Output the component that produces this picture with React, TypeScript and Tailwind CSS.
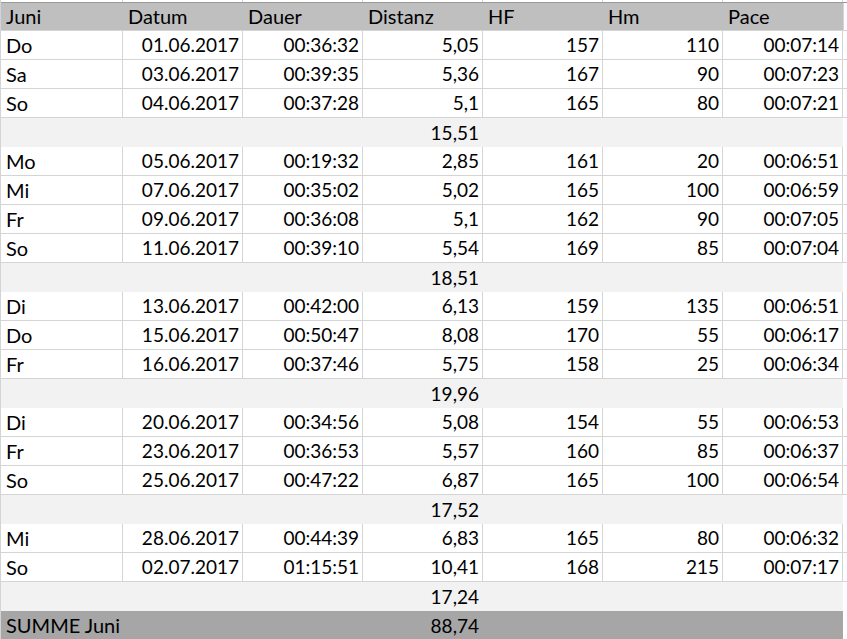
// App.tsx - Laufprotokoll Juni (spreadsheet view)

type Run = {
  tag: string;
  datum: string;
  dauer: string;
  distanz: string;
  hf: string;
  hm: string;
  pace: string;
};

type Row = { kind: 'run'; run: Run } | { kind: 'sub'; value: string };

const run = (
  tag: string,
  datum: string,
  dauer: string,
  distanz: string,
  hf: string,
  hm: string,
  pace: string
): Row => ({ kind: 'run', run: { tag, datum, dauer, distanz, hf, hm, pace } });

const sub = (value: string): Row => ({ kind: 'sub', value });

const rows: Row[] = [
  run('Do', '01.06.2017', '00:36:32', '5,05', '157', '110', '00:07:14'),
  run('Sa', '03.06.2017', '00:39:35', '5,36', '167', '90', '00:07:23'),
  run('So', '04.06.2017', '00:37:28', '5,1', '165', '80', '00:07:21'),
  sub('15,51'),
  run('Mo', '05.06.2017', '00:19:32', '2,85', '161', '20', '00:06:51'),
  run('Mi', '07.06.2017', '00:35:02', '5,02', '165', '100', '00:06:59'),
  run('Fr', '09.06.2017', '00:36:08', '5,1', '162', '90', '00:07:05'),
  run('So', '11.06.2017', '00:39:10', '5,54', '169', '85', '00:07:04'),
  sub('18,51'),
  run('Di', '13.06.2017', '00:42:00', '6,13', '159', '135', '00:06:51'),
  run('Do', '15.06.2017', '00:50:47', '8,08', '170', '55', '00:06:17'),
  run('Fr', '16.06.2017', '00:37:46', '5,75', '158', '25', '00:06:34'),
  sub('19,96'),
  run('Di', '20.06.2017', '00:34:56', '5,08', '154', '55', '00:06:53'),
  run('Fr', '23.06.2017', '00:36:53', '5,57', '160', '85', '00:06:37'),
  run('So', '25.06.2017', '00:47:22', '6,87', '165', '100', '00:06:54'),
  sub('17,52'),
  run('Mi', '28.06.2017', '00:44:39', '6,83', '165', '80', '00:06:32'),
  run('So', '02.07.2017', '01:15:51', '10,41', '168', '215', '00:07:17'),
  sub('17,24'),
];

const headers = ['Juni', 'Datum', 'Dauer', 'Distanz', 'HF', 'Hm', 'Pace'];

// first column is a bit wider, the rest are 120px incl. the gridline
const widths = ['w-[122px]', 'w-[120px]', 'w-[120px]', 'w-[120px]', 'w-[120px]', 'w-[120px]', 'w-[120px]'];

function Cell({
  i,
  children,
  right,
  grid = true,
  label,
}: {
  i: number;
  children?: React.ReactNode;
  right?: boolean;
  grid?: boolean;
  label?: boolean;
}) {
  return (
    <div
      className={`${widths[i]} shrink-0 h-full border-r whitespace-nowrap overflow-hidden ${
        grid ? 'border-[#d4d4d4]' : 'border-transparent'
      } ${right ? 'text-right pr-[3px]' : 'text-left pl-[5px]'} ${label ? 'text-[20px]' : ''}`}
    >
      {children}
    </div>
  );
}

function RunRow({ r }: { r: Run }) {
  return (
    <div className="flex h-[29px] leading-[28px] border-b border-[#d4d4d4]">
      <Cell i={0} label>{r.tag}</Cell>
      <Cell i={1} right>{r.datum}</Cell>
      <Cell i={2} right>{r.dauer}</Cell>
      <Cell i={3} right>{r.distanz}</Cell>
      <Cell i={4} right>{r.hf}</Cell>
      <Cell i={5} right>{r.hm}</Cell>
      <Cell i={6} right>{r.pace}</Cell>
    </div>
  );
}

function SubRow({ value }: { value: string }) {
  return (
    <div className="flex h-[29px] leading-[29px]">
      <div className="flex w-[842px] bg-[#f2f2f2]">
        <Cell i={0} grid={false} />
        <Cell i={1} grid={false} />
        <Cell i={2} grid={false} />
        <Cell i={3} right grid={false}>{value}</Cell>
      </div>
    </div>
  );
}

export default function App() {
  return (
    <div
      className="w-[847px] h-[639px] overflow-hidden bg-white text-[19px] text-black"
      style={{ fontFamily: 'Lato, "Open Sans", sans-serif' }}
    >
      <div className="border-l border-[#d4d4d4]">
        {/* tail of the row above the header */}
        <div className="flex h-[2px]">
          {headers.map((_, i) => (
            <Cell key={i} i={i} />
          ))}
        </div>

        {/* header */}
        <div className="flex h-[29px] leading-[27px] border-t border-b border-t-[#9a9a9a] border-b-[#d4d4d4]">
          <div className="flex w-[842px] bg-[#bfbfbf]">
            {headers.map((h, i) => (
              <Cell key={h} i={i} grid={false} label>
                {h}
              </Cell>
            ))}
          </div>
          <div className="border-r border-[#d4d4d4] w-px" />
        </div>

        {rows.map((row, idx) =>
          row.kind === 'run' ? (
            <RunRow key={idx} r={row.run} />
          ) : (
            <SubRow key={idx} value={row.value} />
          )
        )}

        {/* total */}
        <div className="flex h-[29px] leading-[29px]">
          <div className="flex w-[842px] bg-[#a6a6a6]">
            <div className="w-[242px] shrink-0 pl-[5px] whitespace-nowrap text-[20px]">SUMME Juni</div>
            <Cell i={2} grid={false} />
            <Cell i={3} right grid={false}>88,74</Cell>
          </div>
        </div>
      </div>
    </div>
  );
}
